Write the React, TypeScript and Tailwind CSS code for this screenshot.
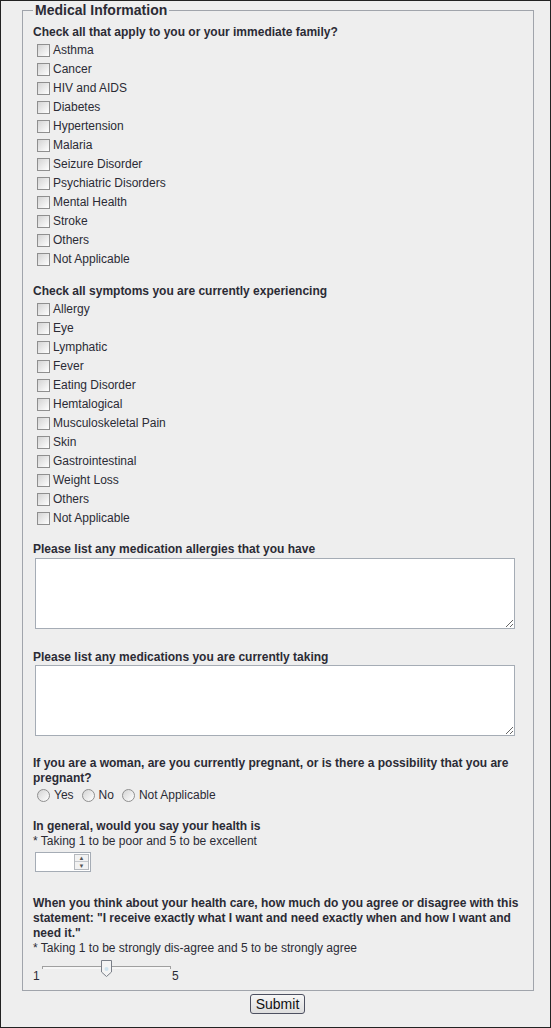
import React from "react";

const familyConditions = [
  "Asthma",
  "Cancer",
  "HIV and AIDS",
  "Diabetes",
  "Hypertension",
  "Malaria",
  "Seizure Disorder",
  "Psychiatric Disorders",
  "Mental Health",
  "Stroke",
  "Others",
  "Not Applicable",
];

const symptoms = [
  "Allergy",
  "Eye",
  "Lymphatic",
  "Fever",
  "Eating Disorder",
  "Hemtalogical",
  "Musculoskeletal Pain",
  "Skin",
  "Gastrointestinal",
  "Weight Loss",
  "Others",
  "Not Applicable",
];

function Box() {
  return (
    <span className="inline-block h-[13px] w-[13px] shrink-0 border border-[#8f8f8f] bg-gradient-to-br from-[#d4d4d4] to-[#ffffff]" />
  );
}

function Radio({ label }: { label: string }) {
  return (
    <label className="flex items-center gap-[4px]">
      <span className="inline-block h-[13px] w-[13px] shrink-0 rounded-full border border-[#8f8f8f] bg-gradient-to-br from-[#d4d4d4] to-[#ffffff]" />
      <span>{label}</span>
    </label>
  );
}

function CheckList({ items }: { items: string[] }) {
  return (
    <ul className="flex flex-col pt-[1px]">
      {items.map((item) => (
        <li key={item} className="flex h-[19px] items-center gap-[3px] pl-[4px]">
          <Box />
          <span>{item}</span>
        </li>
      ))}
    </ul>
  );
}

function Heading({ children }: { children: React.ReactNode }) {
  return <p className="font-bold leading-[15px]">{children}</p>;
}

export default function App() {
  return (
    <div
      className="h-[1028px] w-[551px] border border-[#222] bg-[#eeeeee] text-[12px] leading-[15px] text-[#2b2b35]"
      style={{ fontFamily: '"Liberation Sans", Arial, sans-serif' }}
    >
      <fieldset className="ml-[21px] h-[990px] w-[512px] border border-[#a0a4ab] pl-[10px] pr-[4px]">
        <legend className="px-[2px] text-[14px] font-bold leading-[18px]">Medical Information</legend>

        <div className="mt-[6px]">
          <Heading>Check all that apply to you or your immediate family?</Heading>
          <CheckList items={familyConditions} />
        </div>

        <div className="mt-[15px]">
          <Heading>Check all symptoms you are currently experiencing</Heading>
          <CheckList items={symptoms} />
        </div>

        <div className="mt-[14px]">
          <Heading>Please list any medication allergies that you have</Heading>
          <textarea className="mt-[1px] ml-[2px] block h-[71px] w-[480px] border border-[#a5acb5] bg-white" />
        </div>

        <div className="mt-[21px]">
          <Heading>Please list any medications you are currently taking</Heading>
          <textarea className="ml-[2px] block h-[71px] w-[480px] border border-[#a5acb5] bg-white" />
        </div>

        <div className="mt-[20px]">
          <Heading>
            If you are a woman, are you currently pregnant, or is there a possibility that you are pregnant?
          </Heading>
          <div className="flex h-[18px] items-center gap-[8px] pl-[4px]">
            <Radio label="Yes" />
            <Radio label="No" />
            <Radio label="Not Applicable" />
          </div>
        </div>

        <div className="mt-[15px]">
          <Heading>In general, would you say your health is</Heading>
          <p>* Taking 1 to be poor and 5 to be excellent</p>
          <div className="mt-[3px] ml-[2px] flex h-[20px] w-[56px] items-center justify-end border border-[#a5acb5] bg-white pr-[1px]">
            <div className="flex h-[16px] w-[15px] flex-col border border-[#b5b9be] bg-[#f2f2f2]">
              <span className="flex h-1/2 items-center justify-center border-b border-[#c5c8cc] text-[6px] leading-none text-[#555]">
                ▲
              </span>
              <span className="flex h-1/2 items-center justify-center text-[6px] leading-none text-[#555]">▼</span>
            </div>
          </div>
        </div>

        <div className="mt-[24px]">
          <Heading>
            When you think about your health care, how much do you agree or disagree with this statement: "I receive
            exactly what I want and need exactly when and how I want and need it."
          </Heading>
          <p>* Taking 1 to be strongly dis-agree and 5 to be strongly agree</p>
          <div className="relative mt-[2px] h-[28px] w-[160px]">
            <span className="absolute left-0 top-[11px]">1</span>
            <div className="absolute left-[9px] top-[8px] h-[3px] w-[129px] border-t border-l border-r border-[#a0a0a0] border-b-white bg-[#f7f7f7]" />
            <svg className="absolute left-[67px] top-[1px]" width="13" height="19" viewBox="0 0 13 19">
              <path d="M1.5 1.5 H11.5 V13 L6.5 17.5 L1.5 13 Z" fill="#f4f4f4" stroke="#7a7f88" strokeWidth="1" />
              <circle cx="6.5" cy="10" r="2" fill="#cfe3ee" />
            </svg>
            <span className="absolute left-[139px] top-[11px]">5</span>
          </div>
        </div>
      </fieldset>

      <div className="mt-[3px] flex justify-center pl-[4px]">
        <button className="h-[20px] rounded-[3px] border border-[#4d5060] bg-gradient-to-b from-[#f6f6f6] to-[#dedede] px-[5px] text-[14px] leading-[16px] text-[#111]">
          Submit
        </button>
      </div>
    </div>
  );
}
